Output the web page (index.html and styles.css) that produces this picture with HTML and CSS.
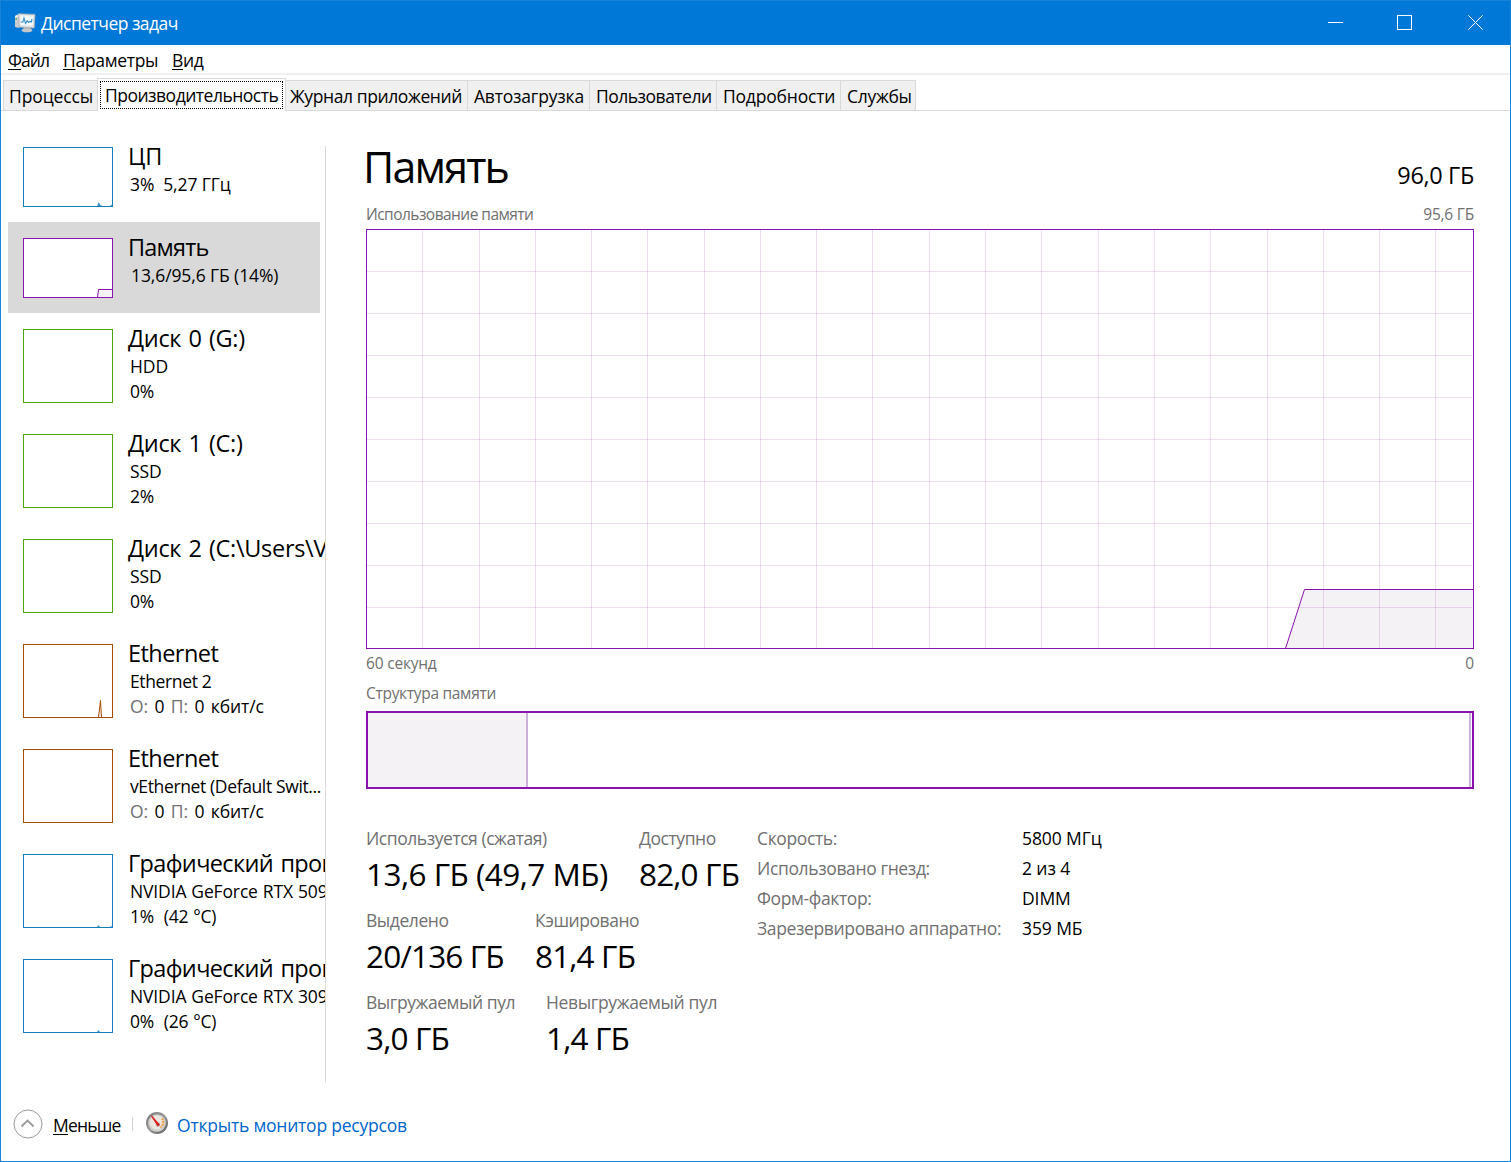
FILE: index.html
```
<!DOCTYPE html>
<html lang="ru">
<head>
<meta charset="UTF-8" />
<meta name="viewport" content="width=device-width, initial-scale=1.0"/>
<title>Диспетчер задач</title>
<link rel="stylesheet" href="styles.css">
</head>
<body>
<div class="window">

<header class="titlebar">
<svg class="app-icon" width="22" height="20" viewBox="0 0 22 20">
<path d="M1 3l4-2v14l-4-1z" fill="#c9ccd0"/>
<path d="M1 3l4-2v2l-4 2z" fill="#eef0f1"/>
<rect x="1.400" y="5" width="1.600" height="1.600" fill="#4caf50"/>
<path d="M10 13h6l1 4h-8z" fill="#a9adb1"/>
<ellipse cx="13" cy="17.200" rx="5.200" ry="2" fill="#c5c8ca"/>
<path d="M4.500 .8l16.500.6-.8 13.600-15.200-1z" fill="#dfe1e3" stroke="#aeb2b6" stroke-width=".8"/>
<path d="M6.300 2.600l12.800.5-.5 9.600-11.800-.7z" fill="#f6fbff"/>
<path d="M6.800 9l2 .2 1.200-4 1.500 5.200 1.700-2.600 1.300 1.600 1.500-1 1.400.5.600-3" fill="none" stroke="#3a93cf" stroke-width="1.200"/>
</svg>
<span class="title">Диспетчер задач</span>
<div class="controls">
<svg width="15" height="15" viewBox="0 0 15 15"><path d="M0 7.500h15"/></svg>
<svg width="15" height="15" viewBox="0 0 15 15"><rect x=".5" y=".5" width="14" height="14"/></svg>
<svg width="15" height="15" viewBox="0 0 15 15"><path d="M.3 .3l14.400 14.400M14.700 .3l-14.400 14.400"/></svg>
</div>
</header>

<nav class="menu">
<span class="menu-file"><u>Ф</u>айл</span>
<span class="menu-options"><u>П</u>араметры</span>
<span><u>В</u>ид</span>
</nav>

<div class="tabs">
<div class="tab tab-processes">Процессы</div>
<div class="tab active"><span>Производительность</span></div>
<div class="tab tab-history">Журнал приложений</div>
<div class="tab tab-startup">Автозагрузка</div>
<div class="tab tab-users">Пользователи</div>
<div class="tab tab-details">Подробности</div>
<div class="tab tab-services">Службы</div>
</div>

<main class="content">
<!-- Devices -->
<div class="sidebar">
<div class="item short">
<svg class="thumb blue" width="90" height="60"><path class="area" d="M74 59.500l1.500-4.500 2 3 3 1.500zM86 59.500l3-2v2z"/><rect x=".5" y=".5" width="89" height="59"/></svg>
<div class="info"><h3>ЦП</h3><p class="wide">3%&nbsp; 5,27 ГГц</p></div>
</div>
<div class="item short selected">
<svg class="thumb purple" width="90" height="60"><path class="area" d="M74.500 59.500l1-8h14v8z"/><rect x=".5" y=".5" width="89" height="59"/></svg>
<div class="info"><h3 class="tight">Память</h3><p class="memory">13,6/95,6 ГБ (14%)</p></div>
</div>
<div class="item">
<svg class="thumb green" width="90" height="74"><rect x=".5" y=".5" width="89" height="73"/></svg>
<div class="info"><h3 class="disk">Диск 0 (G:)</h3><p class="wide">HDD</p><p>0%</p></div>
</div>
<div class="item">
<svg class="thumb green" width="90" height="74"><rect x=".5" y=".5" width="89" height="73"/></svg>
<div class="info"><h3 class="disk">Диск 1 (C:)</h3><p class="wide">SSD</p><p>2%</p></div>
</div>
<div class="item">
<svg class="thumb green" width="90" height="74"><rect x=".5" y=".5" width="89" height="73"/></svg>
<div class="info"><h3 class="disk">Диск 2 (C:\Users\V</h3><p class="wide">SSD</p><p>0%</p></div>
</div>
<div class="item">
<svg class="thumb brown" width="90" height="74"><path class="area" d="M75.500 73.500l2-17 1 17z"/><rect x=".5" y=".5" width="89" height="73"/></svg>
<div class="info"><h3 class="net">Ethernet</h3><p class="adapter">Ethernet 2</p><p class="traffic"><em>О:</em> 0 <em>П:</em> 0 кбит/с</p></div>
</div>
<div class="item">
<svg class="thumb brown" width="90" height="74"><rect x=".5" y=".5" width="89" height="73"/></svg>
<div class="info"><h3 class="net">Ethernet</h3><p class="adapter">vEthernet (Default Swit...</p><p class="traffic"><em>О:</em> 0 <em>П:</em> 0 кбит/с</p></div>
</div>
<div class="item">
<svg class="thumb blue" width="90" height="74"><path class="area" d="M74 73l1.500-2 1.500 2zM87 73l1-1.500 1 1.500z"/><rect x=".5" y=".5" width="89" height="73"/></svg>
<div class="info"><h3 class="tight gpu">Графический процессор 0</h3><p class="model">NVIDIA GeForce RTX 5090</p><p class="temp">1%&nbsp; (42 °C)</p></div>
</div>
<div class="item">
<svg class="thumb blue" width="90" height="74"><path class="area" d="M74 73l1.500-2 1.500 2z"/><rect x=".5" y=".5" width="89" height="73"/></svg>
<div class="info"><h3 class="tight gpu">Графический процессор 1</h3><p class="model">NVIDIA GeForce RTX 3090</p><p class="temp">0%&nbsp; (26 °C)</p></div>
</div>
</div>
<div class="divider"></div>

<!-- Memory -->
<section class="panel">
<div class="panel-head">
<h1>Память</h1>
<span class="capacity">96,0 ГБ</span>
</div>
<div class="caption top"><span>Использование памяти</span><span class="max">95,6 ГБ</span></div>
<svg class="chart" width="1108" height="420">
<path class="fill" d="M919 419.500L938.500 360H1108V419.500z"/>
<path class="grid" d="M56.500 0v420M113.500 0v420M169.500 0v420M225.500 0v420M281.500 0v420M338.500 0v420M394.500 0v420M450.500 0v420M506.500 0v420M563.500 0v420M619.500 0v420M675.500 0v420M732.500 0v420M788.500 0v420M844.500 0v420M901.500 0v420M957.500 0v420M1013.500 0v420M1069.500 0v420"/>
<path class="grid" d="M0 42.500h1106M0 84.500h1106M0 126.500h1106M0 168.500h1106M0 210.500h1106M0 252.500h1106M0 294.500h1106M0 336.500h1106M0 378.500h1106"/>
<path class="line" d="M919.500 419.500L938.500 360.500H1108"/>
<rect class="frame" x=".5" y=".5" width="1107" height="419"/>
</svg>
<div class="caption axis"><span>60 секунд</span><span>0</span></div>
<div class="caption structure"><span>Структура памяти</span></div>
<div class="composition">
<div class="in-use"></div>
<div class="free"></div>
</div>

<div class="stats">
<div class="stats-left">
<div class="stat-row">
<div class="stat used"><label>Используется (сжатая)</label><b class="long">13,6 ГБ (49,7 МБ)</b></div>
<div class="stat"><label>Доступно</label><b>82,0 ГБ</b></div>
</div>
<div class="stat-row">
<div class="stat committed"><label>Выделено</label><b>20/136 ГБ</b></div>
<div class="stat"><label>Кэшировано</label><b>81,4 ГБ</b></div>
</div>
<div class="stat-row">
<div class="stat paged"><label>Выгружаемый пул</label><b>3,0 ГБ</b></div>
<div class="stat"><label class="nonpaged">Невыгружаемый пул</label><b>1,4 ГБ</b></div>
</div>
</div>
<dl class="details">
<dt>Скорость:</dt><dd>5800 МГц</dd>
<dt>Использовано гнезд:</dt><dd>2 из 4</dd>
<dt>Форм-фактор:</dt><dd>DIMM</dd>
<dt>Зарезервировано аппаратно:</dt><dd>359 МБ</dd>
</dl>
</div>
</section>
</main>

<footer class="footer">
<svg class="collapse" width="30" height="30" viewBox="0 0 30 30"><circle cx="15" cy="15" r="14"/><path d="M8.500 17.500l6-6 6 6" stroke-width="1.800"/></svg>
<span class="less"><u>М</u>еньше</span>
<i class="sep"></i>
<svg class="gauge" width="24" height="24" viewBox="0 0 24 24">
<defs><linearGradient id="rim" x1="0" y1="0" x2="1" y2="1"><stop offset="0" stop-color="#777"/><stop offset=".5" stop-color="#999"/><stop offset="1" stop-color="#555"/></linearGradient></defs>
<circle cx="12" cy="12" r="11" fill="url(#rim)"/>
<circle cx="12" cy="12" r="8.800" fill="#d0d0cc"/>
<circle cx="12" cy="11.500" r="7" fill="#ece6e0"/>
<path d="M17 7.500a6.500 6.500 0 0 1-1.500 9" fill="none" stroke="#ee9a3c" stroke-width="2" stroke-dasharray="2 .8"/>
<circle cx="13" cy="13.500" r="2.200" fill="#b9b4b0"/>
<path d="M6.500 5l7.600 8.600-1.200 1z" fill="#d81f1f" stroke="#d81f1f" stroke-width="1.200"/>
</svg>
<a class="monitor">Открыть монитор ресурсов</a>
</footer>
</div>
</body>
</html>
```
FILE: styles.css
```
* {
box-sizing: border-box;
margin: 0;
padding: 0;
}

body {
font-family: "Open Sans", "Noto Sans", sans-serif;
font-size: 17.5px;
letter-spacing: -0.3px;
color: #000;
background: #fff;
width: 1511px;
height: 1162px;
overflow: hidden;
}

.window {
width: 1511px;
height: 1162px;
border: 1px solid #1883d7;
display: flex;
flex-direction: column;
white-space: nowrap;
}

u {
text-underline-offset: 2px;
text-decoration-thickness: 1px;
}

/* Title bar */
.titlebar {
height: 44px;
background: #0078d7;
color: #fff;
display: flex;
align-items: center;
padding-left: 13px;
}

.title {
margin-left: 5px;
letter-spacing: -0.52px;
}

.controls {
margin-left: auto;
margin-right: 27px;
margin-bottom: 2px;
display: flex;
gap: 55px;
}

.controls svg {
fill: none;
stroke: #fff;
stroke-width: 1;
}

.controls svg:first-child {
margin-right: -1px;
}

.controls svg:last-child {
margin-left: 1px;
}

/* Menu */
.menu {
height: 30px;
border-bottom: 2px solid #f0f0f0;
display: flex;
line-height: 31px;
padding-left: 7px;
}

.menu-file {
width: 55px;
letter-spacing: -0.9px;
}

.menu-options {
width: 109px;
}

/* Tabs */
.tabs {
height: 36px;
border-bottom: 1px solid #d9d9d9;
display: flex;
align-items: flex-end;
padding-left: 2px;
}

.tab {
height: 30px;
background: #f0f0f0;
border: 1px solid #d9d9d9;
border-left: none;
border-bottom: none;
padding-left: 6px;
line-height: 31px;
}

.tab-processes {
width: 94px;
border-left: 1px solid #d9d9d9;
border-right: none;
padding-left: 5px;
letter-spacing: -0.1px;
}

.tab.active {
width: 189px;
height: 33px;
margin-bottom: -1px;
background: #fff;
border-left: 1px solid #d9d9d9;
padding: 2px;
}

.tab.active span {
display: block;
width: 183px;
height: 28px;
line-height: 26px;
padding-left: 4px;
border: 1px dotted #000;
letter-spacing: -0.5px;
}

.tab-history {
width: 182px;
padding-left: 4px;
letter-spacing: -0.4px;
}

.tab-startup {
width: 122px;
letter-spacing: -0.2px;
}

.tab-users {
width: 127px;
letter-spacing: -0.5px;
}

.tab-details {
width: 124px;
letter-spacing: -0.2px;
}

.tab-services {
width: 75px;
}

/* Left list */
.content {
height: 976px;
display: flex;
}

.sidebar {
width: 324px;
padding: 20px 0 0 7px;
overflow: hidden;
}

.item {
width: 312px;
height: 105px;
padding-left: 15px;
display: flex;
}

.item.short {
height: 91px;
}

.item.selected {
background: #d9d9d9;
}

.thumb {
flex: none;
margin-top: 16px;
background: #fff;
fill: none;
stroke-width: 1;
}

.blue {
stroke: #117dbb;
}

.purple {
stroke: #8b12ae;
}

.green {
stroke: #4da60c;
}

.brown {
stroke: #a74f01;
}

.area {
fill: #f4f2f4;
}

.blue .area {
fill: #117dbb;
stroke: none;
opacity: 0.8;
}

.info {
padding: 9px 0 0 17px;
}

h3 {
font-size: 23.5px;
font-weight: 400;
line-height: 32px;
letter-spacing: 0;
margin-left: -2px;
}

h3.tight {
letter-spacing: -0.8px;
}

h3.net {
letter-spacing: -0.55px;
}

h3.disk {
letter-spacing: -0.3px;
word-spacing: 1.5px;
}

h3.gpu {
letter-spacing: -0.65px;
word-spacing: 2px;
}

.info p {
line-height: 25px;
}

.info p.wide {
letter-spacing: -0.1px;
}

.info p.memory {
letter-spacing: -0.1px;
margin-left: 1px;
}

.info p.adapter {
letter-spacing: -0.37px;
}

.info p.traffic {
letter-spacing: -0.1px;
word-spacing: 2px;
}

.info p.model {
letter-spacing: -0.14px;
word-spacing: 0.6px;
}

.info p.temp {
letter-spacing: -0.2px;
word-spacing: 0.5px;
}

em {
font-style: normal;
color: #707070;
}

.divider {
width: 1px;
height: 936px;
margin-top: 35px;
background: #d9d9d9;
}

/* Memory panel */
.panel {
width: 1108px;
margin-left: 40px;
padding-top: 26px;
}

.panel-head {
height: 60px;
display: flex;
justify-content: space-between;
align-items: flex-start;
}

h1 {
font-size: 43px;
font-weight: 400;
line-height: 60px;
letter-spacing: -1.85px;
margin-left: -3px;
}

.capacity {
font-size: 23.5px;
line-height: 32px;
letter-spacing: -0.35px;
margin-top: 22px;
}

.caption {
display: flex;
justify-content: space-between;
font-size: 15.5px;
line-height: 24px;
letter-spacing: -0.54px;
color: #707070;
}

.caption.top {
margin-top: 5px;
}

.caption .max {
letter-spacing: -0.2px;
}

.caption.axis {
margin-top: 2px;
letter-spacing: -0.2px;
}

.caption.structure {
margin-top: 6px;
letter-spacing: -0.3px;
}

.chart {
display: block;
margin-top: 3px;
fill: none;
}

.chart .fill {
fill: #f4f2f4;
}

.chart .grid {
stroke: #8b12ae;
stroke-opacity: 0.15;
}

.chart .line,
.chart .frame {
stroke: #8b12ae;
}

.composition {
height: 78px;
margin-top: 6px;
border: 2px solid #8b12ae;
display: flex;
}

.in-use {
width: 160px;
background: #f4f2f4;
border-right: 2px solid #cbb0d7;
}

.free {
width: 943px;
border-right: 2px solid #cbb0d7;
}

.stats {
display: flex;
padding-top: 34px;
}

.stats-left {
width: 391px;
padding-top: 2px;
}

.stat-row {
height: 82px;
display: flex;
}

.stat label {
display: block;
line-height: 26px;
letter-spacing: -0.45px;
color: #707070;
}

.stat label.nonpaged {
letter-spacing: -0.36px;
}

.stat b {
display: block;
font-size: 31.5px;
font-weight: 400;
line-height: 40px;
letter-spacing: -0.85px;
margin-top: 3px;
}

.stat b.long {
letter-spacing: -0.53px;
}

.used {
width: 273px;
}

.committed {
width: 169px;
}

.paged {
width: 180px;
}

.details {
display: grid;
grid-template-columns: 265px auto;
height: 120px;
line-height: 30px;
}

dt {
color: #707070;
letter-spacing: -0.37px;
}

dd {
letter-spacing: -0.1px;
}

/* Footer */
.footer {
display: flex;
align-items: center;
height: 74px;
padding-left: 11px;
}

.collapse {
fill: none;
stroke: #999;
margin-left: 0.5px;
}

.less {
margin-left: 10.5px;
width: 79px;
padding-top: 2px;
letter-spacing: -0.8px;
}

.sep {
width: 1px;
height: 14px;
background: #d0d0d0;
}

.gauge {
margin: 0 0 2px 12px;
}

.monitor {
margin-left: 8px;
padding-top: 2px;
color: #0066cc;
letter-spacing: -0.22px;
}
```
